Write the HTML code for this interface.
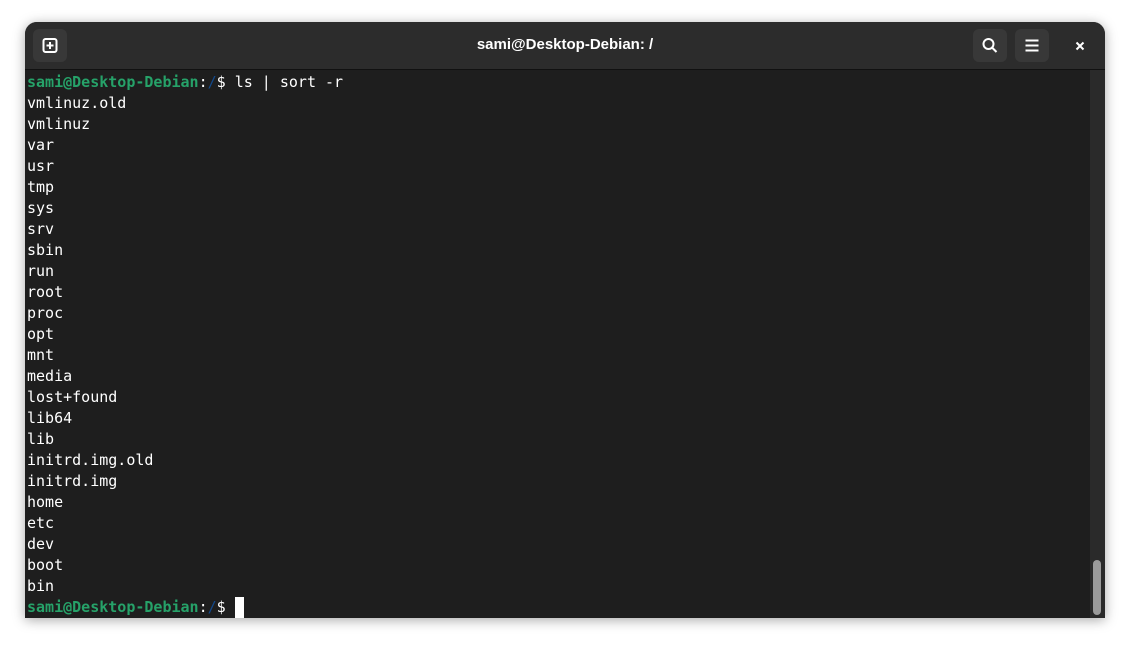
<!DOCTYPE html>
<html><head><style>
html,body{margin:0;padding:0;width:1130px;height:647px;background:#fff;overflow:hidden}
.win{position:absolute;left:25px;top:22px;width:1080px;height:596px;background:#1e1e1e;border-radius:12px 12px 0 0;box-shadow:0 2px 12px rgba(0,0,0,.35);overflow:hidden}
.hdr{position:absolute;left:0;top:0;width:1080px;height:47px;background:#2c2c2c;border-bottom:1px solid #111}
.btn{position:absolute;top:7px;width:34px;height:33px;background:#383838;border-radius:6px}
.title{position:absolute;left:0;width:1080px;top:14px;text-align:center;color:#fff;font:bold 15px "Liberation Sans",sans-serif}
.term{position:absolute;left:2px;top:50px;font:15px/21px "DejaVu Sans Mono",monospace;color:#fff;white-space:pre}
.g{color:#26a269;font-weight:bold}.b{color:#12488b}
.sb{position:absolute;left:1065px;top:48px;width:15px;height:548px;background:#2a2a2a}
.th{position:absolute;left:3px;top:490px;width:8px;height:55px;background:#9a9a9a;border-radius:4px}
.cur{display:inline-block;width:9px;height:21px;background:#fff;vertical-align:top}
</style></head><body>
<div class="win">
<div class="hdr">
<div class="btn" style="left:8px"><svg width="34" height="33" viewBox="0 0 34 33"><rect x="10.5" y="10" width="13" height="13" rx="2" fill="none" stroke="#fff" stroke-width="2"/><path d="M17 13v7M13.5 16.5h7" stroke="#fff" stroke-width="2"/></svg></div>
<div class="title">sami@Desktop-Debian: /</div>
<div class="btn" style="left:948px"><svg width="34" height="33" viewBox="0 0 34 33"><circle cx="15.5" cy="15" r="5" fill="none" stroke="#fff" stroke-width="2"/><path d="M19 18.5l4.5 4.5" stroke="#fff" stroke-width="2"/></svg></div>
<div class="btn" style="left:990px"><svg width="34" height="33" viewBox="0 0 34 33"><path d="M10.5 11.5h13M10.5 16.5h13M10.5 21.5h13" stroke="#fff" stroke-width="2"/></svg></div>
<svg style="position:absolute;left:1050px;top:19px" width="10" height="10" viewBox="0 0 10 10"><path d="M1.5 1.5l7 7M8.5 1.5l-7 7" stroke="#fff" stroke-width="2"/></svg>
</div>
<div class="term"><span class="g">sami@Desktop-Debian</span>:<span class="b">/</span>$ ls | sort -r
vmlinuz.old
vmlinuz
var
usr
tmp
sys
srv
sbin
run
root
proc
opt
mnt
media
lost+found
lib64
lib
initrd.img.old
initrd.img
home
etc
dev
boot
bin
<span class="g">sami@Desktop-Debian</span>:<span class="b">/</span>$ <span class="cur"></span></div>
<div class="sb"><div class="th"></div></div>
</div>
</body></html>
